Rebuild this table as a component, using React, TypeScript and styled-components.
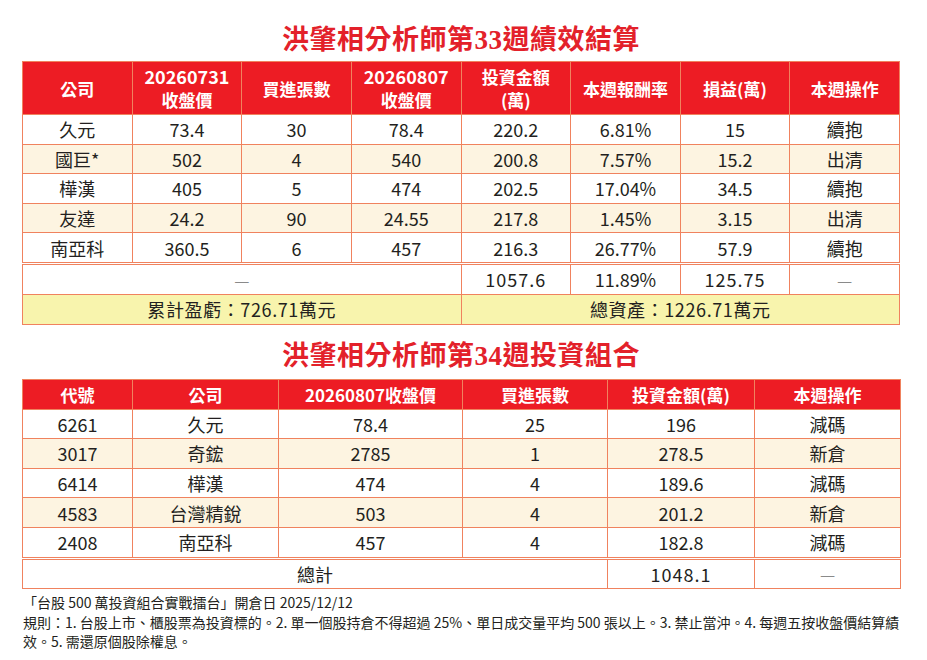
import styled, { createGlobalStyle } from 'styled-components';

const GlobalStyle = createGlobalStyle`
  body {
    margin: 0;
    background: #fff;
    color: #231f20;
    font-family: "Noto Sans CJK TC", sans-serif;
  }
`;

const RED = '#ed1c24';
const LINE = '#f0825e';

type Settled = {
  name: string;
  prev: string;
  qty: string;
  close: string;
  cost: string;
  rate: string;
  gain: string;
  action: string;
};

type Holding = {
  code: string;
  name: string;
  close: string;
  qty: string;
  cost: string;
  action: string;
};

const settled: Settled[] = [
  { name: '久元', prev: '73.4', qty: '30', close: '78.4', cost: '220.2', rate: '6.81%', gain: '15', action: '續抱' },
  { name: '國巨*', prev: '502', qty: '4', close: '540', cost: '200.8', rate: '7.57%', gain: '15.2', action: '出清' },
  { name: '樺漢', prev: '405', qty: '5', close: '474', cost: '202.5', rate: '17.04%', gain: '34.5', action: '續抱' },
  { name: '友達', prev: '24.2', qty: '90', close: '24.55', cost: '217.8', rate: '1.45%', gain: '3.15', action: '出清' },
  { name: '南亞科', prev: '360.5', qty: '6', close: '457', cost: '216.3', rate: '26.77%', gain: '57.9', action: '續抱' },
];

const holdings: Holding[] = [
  { code: '6261', name: '久元', close: '78.4', qty: '25', cost: '196', action: '減碼' },
  { code: '3017', name: '奇鋐', close: '2785', qty: '1', cost: '278.5', action: '新倉' },
  { code: '6414', name: '樺漢', close: '474', qty: '4', cost: '189.6', action: '減碼' },
  { code: '4583', name: '台灣精銳', close: '503', qty: '4', cost: '201.2', action: '新倉' },
  { code: '2408', name: '南亞科', close: '457', qty: '4', cost: '182.8', action: '減碼' },
];

function App() {
  return (
    <>
      <GlobalStyle />
      <Page>
        <Title>洪肇相分析師第33週績效結算</Title>
        <Table>
          <colgroup>
            {Array.from({ length: 8 }).map((_, i) => (
              <col key={i} style={{ width: '12.5%' }} />
            ))}
          </colgroup>
          <thead>
            <tr>
              <HeadCell $tall>公司</HeadCell>
              <HeadCell $tall>
                <HeadLine $num>20260731</HeadLine>
                <HeadLine>收盤價</HeadLine>
              </HeadCell>
              <HeadCell $tall>買進張數</HeadCell>
              <HeadCell $tall>
                <HeadLine $num>20260807</HeadLine>
                <HeadLine>收盤價</HeadLine>
              </HeadCell>
              <HeadCell $tall>
                <HeadLine>投資金額</HeadLine>
                <HeadLine>(萬)</HeadLine>
              </HeadCell>
              <HeadCell $tall>本週報酬率</HeadCell>
              <HeadCell $tall>損益(萬)</HeadCell>
              <HeadCell $tall>本週操作</HeadCell>
            </tr>
          </thead>
          <tbody>
            {settled.map((r, i) => (
              <Row key={r.name} $tint={i % 2 === 1}>
                <Cell>{r.name}</Cell>
                <Cell>{r.prev}</Cell>
                <Cell>{r.qty}</Cell>
                <Cell>{r.close}</Cell>
                <Cell>{r.cost}</Cell>
                <Cell>{r.rate}</Cell>
                <Cell>{r.gain}</Cell>
                <Cell>{r.action}</Cell>
              </Row>
            ))}
            <TotalRow>
              <Cell colSpan={4}>
                <Dash>—</Dash>
              </Cell>
              <Cell $spaced>1057.6</Cell>
              <Cell>11.89%</Cell>
              <Cell $spaced>125.75</Cell>
              <Cell>
                <Dash>—</Dash>
              </Cell>
            </TotalRow>
            <tr>
              <SummaryCell colSpan={4}>累計盈虧：726.71萬元</SummaryCell>
              <SummaryCell colSpan={4}>總資產：1226.71萬元</SummaryCell>
            </tr>
          </tbody>
        </Table>

        <Title $second>洪肇相分析師第34週投資組合</Title>
        <Table>
          <colgroup>
            <col style={{ width: '110px' }} />
            <col style={{ width: '146px' }} />
            <col style={{ width: '184px' }} />
            <col style={{ width: '145px' }} />
            <col style={{ width: '147px' }} />
            <col style={{ width: '146px' }} />
          </colgroup>
          <thead>
            <tr>
              <HeadCell>代號</HeadCell>
              <HeadCell>公司</HeadCell>
              <HeadCell>20260807收盤價</HeadCell>
              <HeadCell>買進張數</HeadCell>
              <HeadCell>投資金額(萬)</HeadCell>
              <HeadCell>本週操作</HeadCell>
            </tr>
          </thead>
          <tbody>
            {holdings.map((r, i) => (
              <Row key={r.code} $tint={i % 2 === 1}>
                <Cell>{r.code}</Cell>
                <Cell>{r.name}</Cell>
                <Cell>{r.close}</Cell>
                <Cell>{r.qty}</Cell>
                <Cell>{r.cost}</Cell>
                <Cell>{r.action}</Cell>
              </Row>
            ))}
            <TotalRow>
              <Cell colSpan={4}>總計</Cell>
              <Cell $spaced>1048.1</Cell>
              <Cell>
                <Dash>—</Dash>
              </Cell>
            </TotalRow>
          </tbody>
        </Table>

        <Footer>
          <p>「台股 500 萬投資組合實戰擂台」開倉日 2025/12/12</p>
          <p>
            規則：1. 台股上市、櫃股票為投資標的。2. 單一個股持倉不得超過 25%、單日成交量平均 500
            張以上。3. 禁止當沖。4. 每週五按收盤價結算績效。5. 需還原個股除權息。
          </p>
        </Footer>
      </Page>
    </>
  );
}

export default App;

const Page = styled.div`
  width: 878px;
  padding: 0 27px 0 22px;
`;

const Title = styled.h1<{ $second?: boolean }>`
  margin: ${({ $second }) => ($second ? '13px 0 5px' : '0 0 3px')};
  padding-top: ${({ $second }) => ($second ? '0' : '22px')};
  height: 36px;
  line-height: 36px;
  text-align: center;
  color: #e3212a;
  font-family: "Liberation Serif", "Noto Sans CJK TC", serif;
  font-size: 27px;
  font-weight: 700;
  letter-spacing: 0.5px;
`;

const Table = styled.table`
  width: 878px;
  border-collapse: collapse;
  table-layout: fixed;
`;

const HeadCell = styled.th<{ $tall?: boolean }>`
  height: ${({ $tall }) => ($tall ? '52px' : '29px')};
  padding: 0;
  background: ${RED};
  border: 1px solid ${LINE};
  color: #fff;
  font-size: 17px;
  font-weight: 700;
  line-height: 23px;
  text-align: center;
  vertical-align: middle;
`;

const HeadLine = styled.span<{ $num?: boolean }>`
  display: block;
  height: 23px;
  line-height: 23px;
  font-size: ${({ $num }) => ($num ? '18px' : '17px')};
`;

const Row = styled.tr<{ $tint?: boolean }>`
  background: ${({ $tint }) => ($tint ? '#fdf4e1' : '#fff')};
`;

const TotalRow = styled.tr`
  background: #fff;

  td {
    border-top: 3px double ${LINE};
  }
`;

const Cell = styled.td<{ $spaced?: boolean }>`
  height: 28.6px;
  padding: 0;
  border: 1px solid ${LINE};
  font-size: 18px;
  line-height: 22px;
  text-align: center;
  vertical-align: middle;
  letter-spacing: ${({ $spaced }) => ($spaced ? '1px' : '0')};
`;

const Dash = styled.span`
  color: #8a8a8a;
  font-size: 17px;
`;

const SummaryCell = styled.td`
  height: 29px;
  padding: 0;
  background: #f8f4ad;
  border: 1px solid ${LINE};
  font-size: 18px;
  line-height: 22px;
  letter-spacing: 0.6px;
  text-align: center;
  vertical-align: middle;
`;

const Footer = styled.div`
  margin-top: 4px;
  padding-left: 1px;
  font-size: 14px;
  line-height: 19.5px;

  p {
    margin: 0;
  }
`;
